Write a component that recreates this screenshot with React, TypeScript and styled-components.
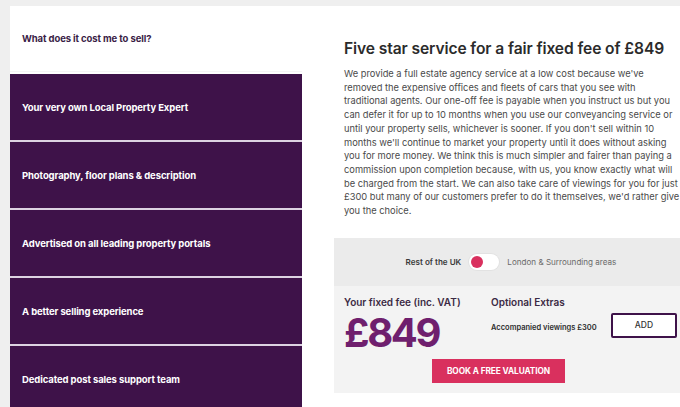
import React, { useState } from 'react'
import styled, { createGlobalStyle } from 'styled-components'

const GlobalStyle = createGlobalStyle`
    html, body {
        margin: 0;
        padding: 0;
        background: #efefef;
        font-family: 'Inter', 'Open Sans', sans-serif;
        -webkit-font-smoothing: antialiased;
    }
`

const features = [
    'Your very own Local Property Expert',
    'Photography, floor plans & description',
    'Advertised on all leading property portals',
    'A better selling experience',
    'Dedicated post sales support team',
]

// broken the same way as the live page
const bodyLines = [
    "We provide a full estate agency service at a low cost because we've",
    'removed the expensive offices and fleets of cars that you see with',
    'traditional agents. Our one-off fee is payable when you instruct us but you',
    'can defer it for up to 10 months when you use our conveyancing service or',
    "until your property sells, whichever is sooner. If you don't sell within 10",
    "months we'll continue to market your property until it does without asking",
    'you for more money. We think this is much simpler and fairer than paying a',
    'commission upon completion because, with us, you know exactly what will',
    'be charged from the start. We can also take care of viewings for you for just',
    "£300 but many of our customers prefer to do it themselves, we'd rather give",
    'you the choice.',
]

const Page = styled.div`
    padding: 6px 0 0 10px;
    width: 680px;
    height: 407px;
    box-sizing: border-box;
    overflow: hidden;
`

const Card = styled.div`
    background: #fff;
    display: grid;
    grid-template-columns: 292px 1fr;
    height: 420px;
`

const Menu = styled.div`
    display: flex;
    flex-direction: column;
`

const MenuItem = styled.div<{ $active?: boolean }>`
    height: ${(p) => (p.$active ? '66px' : '68px')};
    flex-shrink: 0;
    display: flex;
    align-items: center;
    padding-left: 12px;
    box-sizing: border-box;
    font-size: 9.5px;
    font-weight: 700;
    letter-spacing: -0.1px;
    color: ${(p) => (p.$active ? '#3b1e47' : '#fff')};
    background: ${(p) => (p.$active ? '#fff' : '#3e1249')};
    border-top: ${(p) => (p.$active ? 'none' : '2px solid #ddd3e2')};
    border-bottom: ${(p) => (p.$active ? '1px solid #f6f4f6' : 'none')};
    &:nth-child(2) {
        border-top-color: #fff;
    }
`

const Content = styled.div`
    padding: 32px 0 0 32px;
    display: flex;
    flex-direction: column;
`

const Heading = styled.h2`
    margin: 0 0 8px 10px;
    font-size: 15.6px;
    line-height: 21px;
    font-weight: 600;
    letter-spacing: -0.1px;
    color: #2b2b2b;
`

const Body = styled.div`
    margin: 0 0 0 10px;
    font-size: 9.3px;
    line-height: 13.7px;
    color: #4a4a4a;
`

const BodyLine = styled.div`
    white-space: nowrap;
`

const PricePanel = styled.div`
    margin-top: 20px;
    background: #f3f3f3;
    height: 155px;
    display: flex;
    flex-direction: column;
`

const RegionBar = styled.div`
    height: 48px;
    flex-shrink: 0;
    background: #ebebeb;
    display: flex;
    align-items: center;
    justify-content: center;
    gap: 8px;
    padding-left: 8px;
    font-size: 8.1px;
`

const RegionLabel = styled.span<{ $on?: boolean }>`
    font-weight: ${(p) => (p.$on ? 600 : 400)};
    color: ${(p) => (p.$on ? '#3a3a3a' : '#6a6a6a')};
`

const Switch = styled.button<{ $right: boolean }>`
    width: 30px;
    height: 16px;
    border-radius: 8px;
    border: none;
    background: #fff;
    box-shadow: 0 0 0 1px #e2e2e2;
    padding: 0 2px;
    display: flex;
    align-items: center;
    justify-content: ${(p) => (p.$right ? 'flex-end' : 'flex-start')};
    cursor: pointer;
`

const Knob = styled.span`
    width: 12px;
    height: 12px;
    border-radius: 50%;
    background: #d9305e;
`

const FeeRow = styled.div`
    display: grid;
    grid-template-columns: 147px 120px 66px;
    padding: 10px 0 0 10px;
`

const Label = styled.div`
    font-size: 10px;
    font-weight: 600;
    color: #3b2a44;
    line-height: 12px;
`

const Price = styled.div`
    font-size: 40px;
    font-weight: 700;
    color: #6f1f6e;
    letter-spacing: -2.4px;
    line-height: 40px;
    margin-top: 5px;
`

const ExtraText = styled.div`
    font-size: 7.5px;
    font-weight: 600;
    color: #2d2d2d;
    margin-top: 15px;
`

const AddButton = styled.button`
    margin-top: 17px;
    width: 66px;
    height: 25px;
    background: #fff;
    border: 2px solid #3e1249;
    border-radius: 2px;
    font-family: inherit;
    font-size: 8.5px;
    font-weight: 500;
    color: #333;
`

const CtaRow = styled.div`
    display: flex;
    padding: 6px 0 0 98px;
`

const Cta = styled.button`
    width: 133px;
    height: 24px;
    border: none;
    background: #d9305e;
    color: #fff;
    font-family: inherit;
    font-size: 8.3px;
    font-weight: 700;
    letter-spacing: -0.1px;
`

const App = () => {
    const [london, setLondon] = useState(false)

    return (
        <Page>
            <GlobalStyle />
            <Card>
                <Menu>
                    <MenuItem $active>What does it cost me to sell?</MenuItem>
                    {features.map((f, i) => (
                        <MenuItem key={i}>{f}</MenuItem>
                    ))}
                </Menu>
                <Content>
                    <Heading>Five star service for a fair fixed fee of £849</Heading>
                    <Body>
                        {bodyLines.map((line, i) => (
                            <BodyLine key={i}>{line}</BodyLine>
                        ))}
                    </Body>
                    <PricePanel>
                        <RegionBar>
                            <RegionLabel $on={!london}>Rest of the UK</RegionLabel>
                            <Switch $right={london} onClick={() => setLondon(!london)}>
                                <Knob />
                            </Switch>
                            <RegionLabel $on={london}>London &amp; Surrounding areas</RegionLabel>
                        </RegionBar>
                        <FeeRow>
                            <div>
                                <Label>Your fixed fee (inc. VAT)</Label>
                                <Price>{london ? '£1,049' : '£849'}</Price>
                            </div>
                            <div>
                                <Label>Optional Extras</Label>
                                <ExtraText>Accompanied viewings £300</ExtraText>
                            </div>
                            <div>
                                <AddButton>ADD</AddButton>
                            </div>
                        </FeeRow>
                        <CtaRow>
                            <Cta>BOOK A FREE VALUATION</Cta>
                        </CtaRow>
                    </PricePanel>
                </Content>
            </Card>
        </Page>
    )
}

export default App
